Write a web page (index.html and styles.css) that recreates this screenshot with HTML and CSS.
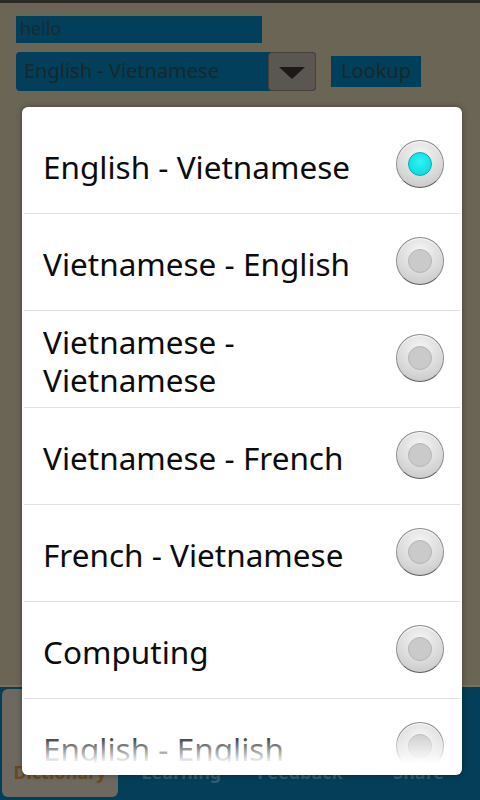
FILE: index.html
```html
<!DOCTYPE html>
<html lang="en">
<head>
<meta http-equiv="Content-Type" content="text/html; charset=UTF-8">
<meta name="viewport" content="width=device-width">
<title>Dictionary</title>
<link rel="stylesheet" href="styles.css">
</head>
<body>
<div class="statusbar"></div>

<main class="lookup">
  <div class="word">hello</div>
  <div class="lookup-row">
    <div class="select">
      <span class="select-value">English - Vietnamese</span>
      <span class="select-arrow"></span>
    </div>
    <div class="lookup-btn">Lookup</div>
  </div>
</main>

<nav class="tabs">
  <div class="tab active">Dictionary</div>
  <div class="tab">Learning</div>
  <div class="tab">Feedback</div>
  <div class="tab">Share</div>
</nav>

<!-- dictionary picker, shown over the dimmed screen -->
<div class="dialog">
  <ul class="options">
    <li class="checked"><span class="label">English - Vietnamese</span><span class="radio"></span></li>
    <li><span class="label">Vietnamese - English</span><span class="radio"></span></li>
    <li><span class="label narrow">Vietnamese - Vietnamese</span><span class="radio"></span></li>
    <li><span class="label">Vietnamese - French</span><span class="radio"></span></li>
    <li><span class="label">French - Vietnamese</span><span class="radio"></span></li>
    <li><span class="label">Computing</span><span class="radio"></span></li>
    <li><span class="label">English - English</span><span class="radio"></span></li>
  </ul>
</div>
</body>
</html>
```

FILE: styles.css
```css
html,body{margin:0;padding:0}
body{width:480px;height:800px;overflow:hidden;display:flex;flex-direction:column;background:#6b6556;font-family:"Noto Sans","DejaVu Sans",sans-serif;position:relative}

.statusbar{height:3px;background:#2b2924;flex:none}

.lookup{flex:1;padding:13px 16px 0}
.word{width:242px;height:27px;padding-left:4px;background:#013f5a;color:#1b2b2d;font-size:18px;line-height:25px}
.lookup-row{display:flex;align-items:center;margin-top:9px}
.select{display:flex;width:300px;height:39px;border-radius:4px;overflow:hidden;background:#013f5a}
.select-value{flex:1;padding-left:8px;color:#18282b;font-size:20px;line-height:37px}
.select-arrow{width:46px;background:#5a5651;border:1px solid #45423d;border-radius:4px;position:relative}
.select-arrow::after{content:"";position:absolute;left:10px;top:14px;border-left:13px solid transparent;border-right:13px solid transparent;border-top:12px solid #1c1a18}
.lookup-btn{margin-left:15px;width:90px;height:31px;background:#013f5a;color:#18282b;font-size:20px;line-height:29px;text-align:center}

.tabs{flex:none;height:111px;display:flex;padding:2px 2px 0;background:#053e58;border-top:2px solid #7c6f5e}
.tab{flex:1;display:flex;align-items:flex-end;justify-content:center;padding-bottom:16px;color:#335d72;font-size:18px;font-weight:bold}
.tab.active{flex:none;width:116px;margin-right:4px;margin-bottom:3px;padding-bottom:13px;background:#6d6961;color:#6a4a1c;border-radius:6px}

.dialog{position:absolute;left:22px;top:107px;width:440px;height:668px;background:#fff;border-radius:6px;box-shadow:0 0 6px rgba(0,0,0,.35);overflow:hidden}
.options{list-style:none;margin:10px 0 0;padding:0;height:650px;overflow:hidden;position:relative}
/* fading edge at the bottom of the scrolling list */
.options::after{content:"";position:absolute;left:0;right:0;bottom:0;height:36px;background:linear-gradient(rgba(255,255,255,0),#fff 90%)}
.options li{height:96px;display:flex;align-items:center;justify-content:space-between;margin:0 2px;padding:0 16px 0 19px;border-bottom:1px solid #e2e2e2}
.label{padding-top:4px;color:#0c0c0c;font-size:31.5px;line-height:38px}
.label.narrow{width:240px}

.radio{flex:none;width:46px;height:46px;margin-bottom:2px;border-radius:50%;border:1px solid #8c8c8c;border-bottom-color:#5e5e5e;background:radial-gradient(circle at 50% 30%,#f6f6f6,#d8d8d8 60%,#c0c0c0);position:relative;box-shadow:inset 0 1px 1px #fff}
.radio::after{content:"";position:absolute;left:11px;top:11px;width:22px;height:22px;border-radius:50%;background:#cacaca;border:1px solid #b5b5b5}
.checked .radio::after{background:radial-gradient(circle at 50% 40%,#2ff4f4,#00d6d8);border-color:#15a7a9}
```
